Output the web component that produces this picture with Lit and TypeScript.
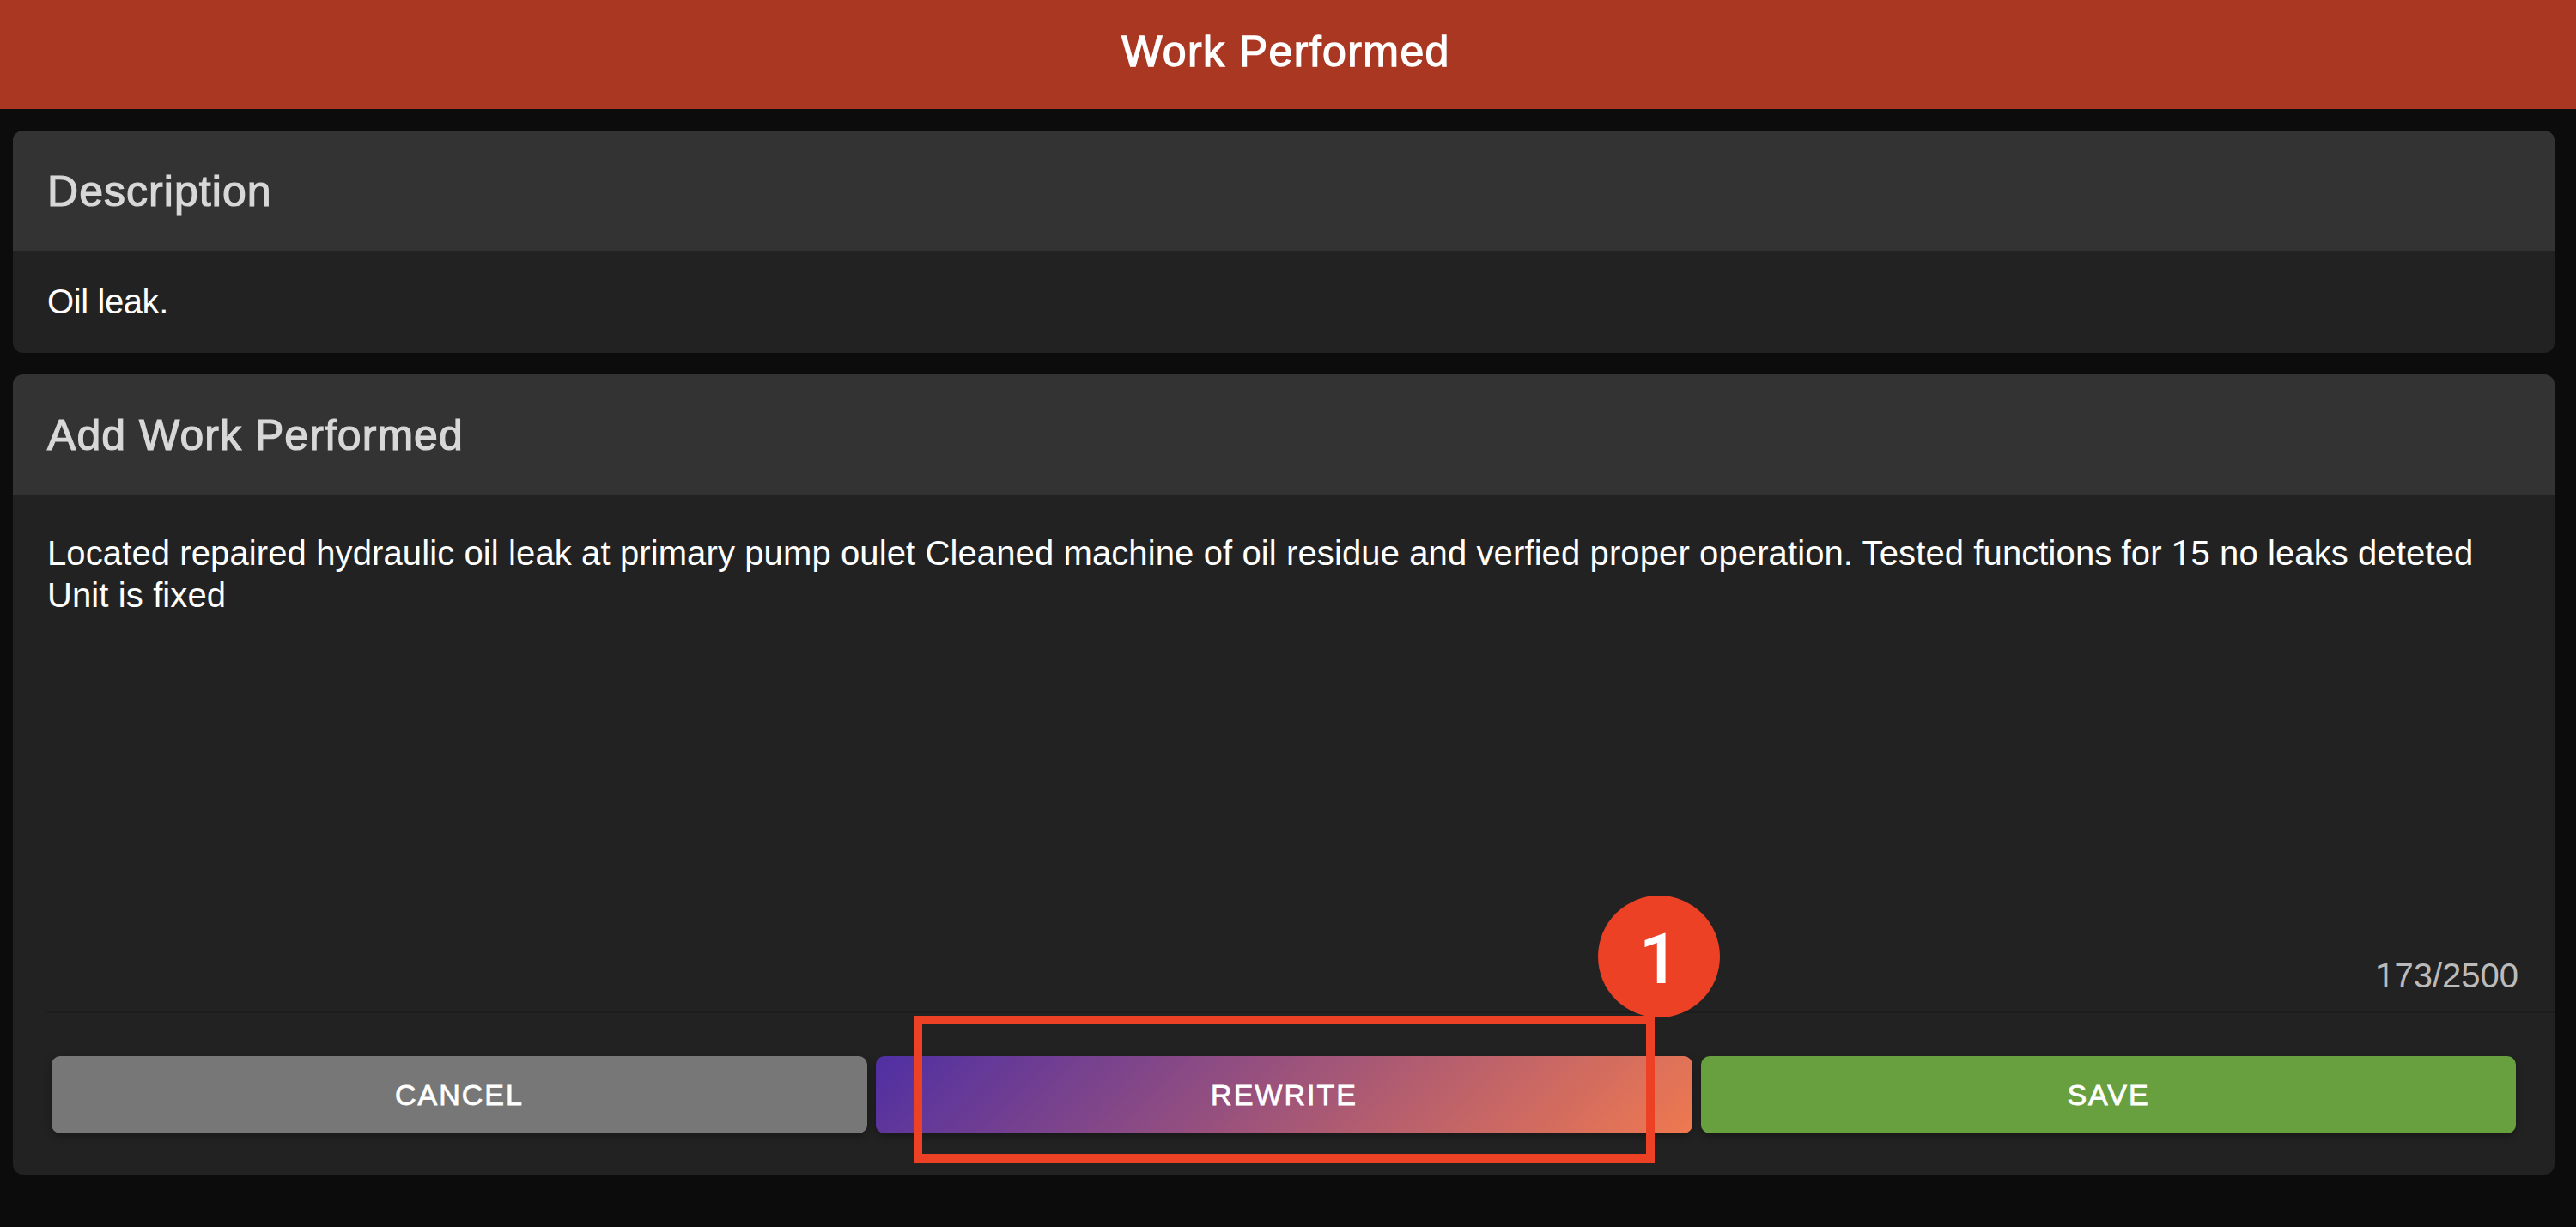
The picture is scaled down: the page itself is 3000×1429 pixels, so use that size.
import { LitElement, html, css } from "lit";
import { customElement } from "lit/decorators.js";

@customElement("app-root")
export class AppRoot extends LitElement {
  static styles = css`
    :host {
      display: block;
      position: relative;
      width: 3000px;
      height: 1429px;
      overflow: hidden;
      background: #0c0c0c;
      font-family: "Liberation Sans", Arial, sans-serif;
      color: #fff;
    }
    .bar {
      height: 127px;
      box-sizing: border-box;
      padding: 0 5px 8px 0;
      background: #a93722;
      display: flex;
      align-items: center;
      justify-content: center;
      font-size: 50px;
      letter-spacing: 1.4px;
      -webkit-text-stroke: 1.3px #fff;
    }
    .page {
      display: flex;
      flex-direction: column;
      gap: 25px;
      padding: 25px 25px 0 15px;
    }
    .card {
      background: #222;
      border-radius: 12px;
      overflow: hidden;
    }
    .head {
      flex: none;
      height: 140px;
      box-sizing: border-box;
      padding: 2px 40px 0;
      background: #333;
      display: flex;
      align-items: center;
      font-size: 50px;
      letter-spacing: 1.05px;
      color: #d8d8d8;
      -webkit-text-stroke: 1.2px #d8d8d8;
    }
    .desc {
      height: 119px;
      padding: 0 40px;
      display: flex;
      align-items: center;
      font-size: 40px;
      letter-spacing: -0.4px;
    }
    .work {
      height: 932px;
      display: flex;
      flex-direction: column;
    }
    .text {
      height: 536px;
      padding: 44px 40px 0;
      font-size: 40px;
      line-height: 48px;
      letter-spacing: 0.11px;
      box-sizing: border-box;
    }
    .count {
      text-align: right;
      font-size: 40px;
      line-height: 48px;
      color: #bbb;
      padding-right: 42px;
      padding-bottom: 17px;
    }
    .one {
      font-family: Roboto, sans-serif;
    }
    .rule {
      height: 2px;
      background: #1c1c1c;
      margin-left: 40px;
    }
    .actions {
      display: grid;
      grid-template-columns: 950px 951px 949px;
      gap: 10px;
      padding: 50px 45px 0;
    }
    .btn {
      height: 90px;
      border-radius: 10px;
      display: flex;
      align-items: center;
      justify-content: center;
      font-size: 34px;
      letter-spacing: 2px;
      -webkit-text-stroke: 0.8px #fff;
      box-shadow: 0 4px 10px rgba(0, 0, 0, 0.3);
    }
    .cancel { background: #777; }
    .rewrite { background: linear-gradient(135deg, #4f2fa3 0%, #ef7950 100%); }
    .save { background: #689f3f; }
    .mark {
      position: absolute;
      left: 1064px;
      top: 1183px;
      width: 863px;
      height: 171px;
      border: 10px solid #ec4125;
      box-sizing: border-box;
    }
    .badge {
      position: absolute;
      left: 1861px;
      top: 1043px;
      width: 142px;
      height: 142px;
      box-sizing: border-box;
      padding-top: 5px;
      border-radius: 50%;
      background: #ec4125;
      display: flex;
      align-items: center;
      justify-content: center;
      font-family: Roboto, sans-serif;
      font-size: 82px;
      font-weight: 500;
    }
  `;

  render() {
    return html`
      <div class="bar">Work Performed</div>
      <div class="page">
        <section class="card">
          <div class="head">Description</div>
          <div class="desc">Oil leak.</div>
        </section>
        <section class="card work">
          <div class="head">Add Work Performed</div>
          <div class="text">Located repaired hydraulic oil leak at primary pump oulet Cleaned machine of oil residue and verfied proper operation. Tested functions for <span class="one">1</span>5 no leaks deteted<br />Unit is fixed</div>
          <div class="count"><span class="one">1</span>73/2500</div>
          <div class="rule"></div>
          <div class="actions">
            <div class="btn cancel">CANCEL</div>
            <div class="btn rewrite">REWRITE</div>
            <div class="btn save">SAVE</div>
          </div>
        </section>
      </div>
      <div class="mark"></div>
      <div class="badge">1</div>
    `;
  }
}
